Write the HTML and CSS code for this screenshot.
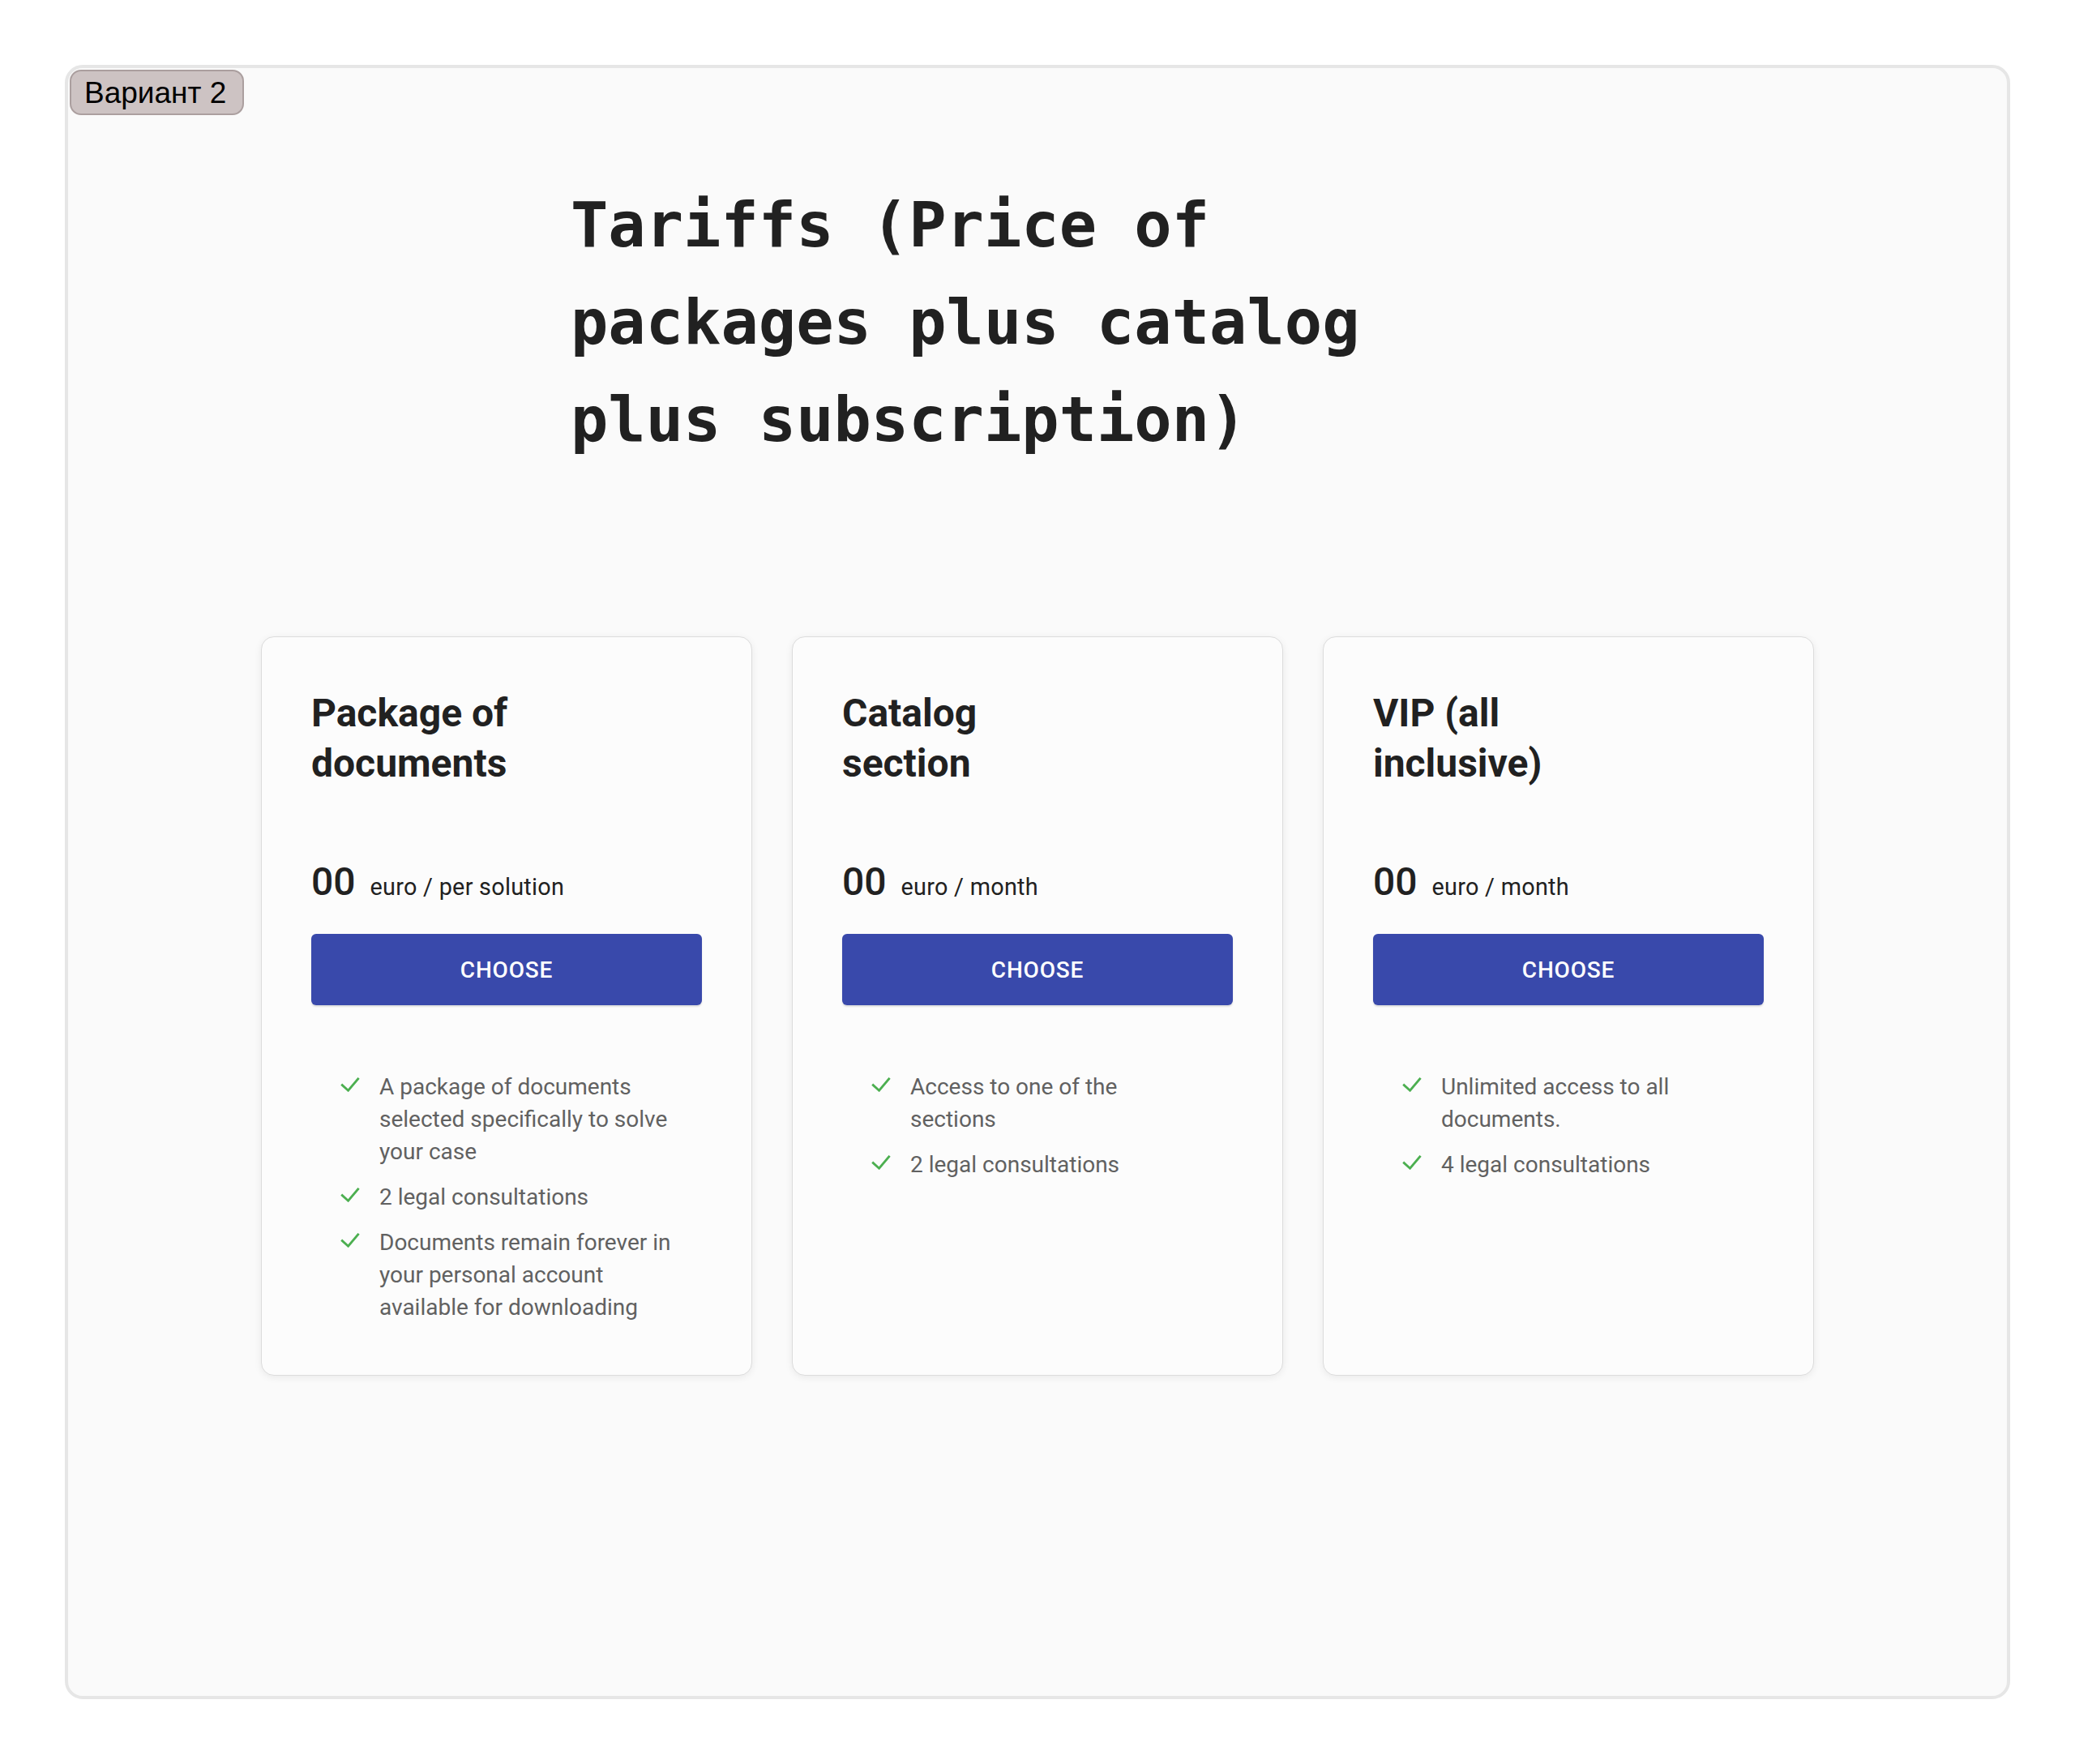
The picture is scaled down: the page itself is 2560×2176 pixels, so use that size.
FILE: index.html
```html
<!DOCTYPE html>
<html lang="en">
<head>
<meta charset="utf-8">
<title>Tariffs</title>
<link rel="stylesheet" href="styles.css">
</head>
<body>
<div class="frame">
  <div class="badge">Вариант 2</div>
  <h1 class="heading">Tariffs (Price of packages plus catalog plus subscription)</h1>
  <div class="cards">
    <div class="card">
      <h2 class="card-title">Package of documents</h2>
      <div class="price"><span class="amount">00</span><span class="unit">euro / per solution</span></div>
      <button class="choose">Choose</button>
      <ul class="features">
        <li><svg class="check" viewBox="0 0 24 18"><polyline points="1.2,8.6 9.6,16.2 22.6,0.8"/></svg><span>A package of documents selected specifically to solve your case</span></li>
        <li><svg class="check" viewBox="0 0 24 18"><polyline points="1.2,8.6 9.6,16.2 22.6,0.8"/></svg><span>2 legal consultations</span></li>
        <li><svg class="check" viewBox="0 0 24 18"><polyline points="1.2,8.6 9.6,16.2 22.6,0.8"/></svg><span>Documents remain forever in your personal account available for downloading</span></li>
      </ul>
    </div>
    <div class="card">
      <h2 class="card-title">Catalog section</h2>
      <div class="price"><span class="amount">00</span><span class="unit">euro / month</span></div>
      <button class="choose">Choose</button>
      <ul class="features">
        <li><svg class="check" viewBox="0 0 24 18"><polyline points="1.2,8.6 9.6,16.2 22.6,0.8"/></svg><span>Access to one of the sections</span></li>
        <li><svg class="check" viewBox="0 0 24 18"><polyline points="1.2,8.6 9.6,16.2 22.6,0.8"/></svg><span>2 legal consultations</span></li>
      </ul>
    </div>
    <div class="card">
      <h2 class="card-title">VIP (all inclusive)</h2>
      <div class="price"><span class="amount">00</span><span class="unit">euro / month</span></div>
      <button class="choose">Choose</button>
      <ul class="features">
        <li><svg class="check" viewBox="0 0 24 18"><polyline points="1.2,8.6 9.6,16.2 22.6,0.8"/></svg><span>Unlimited access to all documents.</span></li>
        <li><svg class="check" viewBox="0 0 24 18"><polyline points="1.2,8.6 9.6,16.2 22.6,0.8"/></svg><span>4 legal consultations</span></li>
      </ul>
    </div>
  </div>
</div>
</body>
</html>
```
FILE: styles.css
```css
html, body {
  margin: 0;
  background: #ffffff;
}
body {
  padding: 80px;
  font-family: Roboto, "Noto Sans", sans-serif;
}
.frame {
  position: relative;
  box-sizing: border-box;
  width: 2400px;
  height: 2016px;
  border: 4px solid #e6e6e6;
  border-radius: 22px;
  background: #fafafa;
  padding-top: 134px;
}
.badge {
  position: absolute;
  top: 2px;
  left: 2px;
  box-sizing: border-box;
  width: 215px;
  height: 56px;
  padding-left: 16px;
  padding-top: 2px;
  display: flex;
  align-items: center;
  background: #cdc3c3;
  border: 2px solid #ab9f9f;
  border-radius: 14px;
  font-family: "Liberation Sans", Arial, sans-serif;
  font-size: 37px;
  color: #000;
}
.heading {
  width: 1152px;
  margin: 0 auto;
  font-family: "DejaVu Sans Mono", monospace;
  font-weight: bold;
  font-size: 77px;
  line-height: 120px;
  color: #212121;
}
.cards {
  margin-top: 207px;
  display: grid;
  grid-template-columns: repeat(3, 606px);
  column-gap: 49px;
  justify-content: center;
}
.card {
  box-sizing: border-box;
  background: #fcfcfc;
  border: 1px solid #dcdcdc;
  border-radius: 16px;
  box-shadow: 0 2px 10px rgba(0, 0, 0, 0.07);
  padding: 63px 61px 63px 61px;
  display: flex;
  flex-direction: column;
}
.card-title {
  margin: 0;
  max-width: 300px;
  font-size: 48px;
  font-weight: 700;
  line-height: 62px;
  color: #212121;
}
.price {
  margin-top: 87px;
  display: flex;
  align-items: baseline;
  gap: 18px;
  color: #212121;
}
.amount {
  font-size: 48px;
  font-weight: 500;
  line-height: 56px;
}
.unit {
  font-size: 28.8px;
  letter-spacing: 0.27px;
}
.choose {
  margin-top: 36px;
  height: 88px;
  width: 100%;
  border: none;
  border-radius: 6px;
  background: #3949ab;
  color: #ffffff;
  font-family: Roboto, sans-serif;
  font-size: 28px;
  font-weight: 500;
  letter-spacing: 0.8px;
  text-transform: uppercase;
  box-shadow: 0 2px 2px rgba(0, 0, 0, 0.12);
}
.features {
  list-style: none;
  margin: 81px 0 0 0;
  padding: 0 32px 0 36px;
  display: flex;
  flex-direction: column;
  gap: 16px;
}
.features li {
  display: flex;
  align-items: flex-start;
  font-size: 28px;
  line-height: 40px;
  color: #616161;
}
.check {
  flex: none;
  width: 24px;
  height: 18px;
  margin-top: 8px;
  margin-right: 24px;
}
.check polyline {
  fill: none;
  stroke: #4caf50;
  stroke-width: 2.8;
}
```
